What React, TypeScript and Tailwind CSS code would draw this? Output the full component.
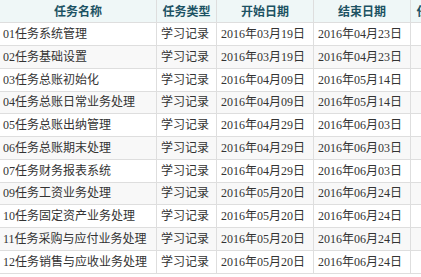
const ROWS: { name: string; start: string; end: string }[] = [
  { name: '01任务系统管理', start: '2016年03月19日', end: '2016年04月23日' },
  { name: '02任务基础设置', start: '2016年03月19日', end: '2016年04月23日' },
  { name: '03任务总账初始化', start: '2016年04月09日', end: '2016年05月14日' },
  { name: '04任务总账日常业务处理', start: '2016年04月09日', end: '2016年05月14日' },
  { name: '05任务总账出纳管理', start: '2016年04月29日', end: '2016年06月03日' },
  { name: '06任务总账期末处理', start: '2016年04月29日', end: '2016年06月03日' },
  { name: '07任务财务报表系统', start: '2016年04月29日', end: '2016年06月03日' },
  { name: '09任务工资业务处理', start: '2016年05月20日', end: '2016年06月24日' },
  { name: '10任务固定资产业务处理', start: '2016年05月20日', end: '2016年06月24日' },
  { name: '11任务采购与应付业务处理', start: '2016年05月20日', end: '2016年06月24日' },
  { name: '12任务销售与应收业务处理', start: '2016年05月20日', end: '2016年06月24日' },
];

const cell = 'shrink-0 h-full flex items-center border-r border-[#dedede] overflow-hidden whitespace-nowrap';

export default function App() {
  return (
    <div className="w-[421px] h-[277px] overflow-hidden bg-white text-[12px] text-[#333]" style={{ fontFamily: '"Liberation Serif", "Noto Sans CJK SC", serif' }}>
      <div className="w-[471px]">
        {/* Header */}
        <div className="flex h-[23.3px] bg-[#eff7f7] border-b border-[#dedede] font-bold text-[#1c5263]" style={{ fontFamily: '"Noto Sans CJK SC", sans-serif' }}>
          <div className={cell + ' w-[157px] justify-center'}>任务名称</div>
          <div className={cell + ' w-[60px] justify-center'}>任务类型</div>
          <div className={cell + ' w-[97px] justify-center'}>开始日期</div>
          <div className={cell + ' w-[97px] justify-center'}>结束日期</div>
          <div className={cell + ' w-[60px] justify-center'}>任务状态</div>
        </div>

        {/* Rows */}
        {ROWS.map((r, i) => (
          <div key={r.name} className={'flex h-[22.75px] border-b border-[#dedede] ' + (i % 2 ? 'bg-[#f8f8f8]' : 'bg-white')}>
            <div className={cell + ' w-[157px] pl-[3px]'}>{r.name}</div>
            <div className={cell + ' w-[60px] pl-[4px]'}>学习记录</div>
            <div className={cell + ' w-[97px] pl-[4px]'}>{r.start}</div>
            <div className={cell + ' w-[97px] pl-[4px]'}>{r.end}</div>
            <div className={cell + ' w-[60px]'}></div>
          </div>
        ))}
      </div>
    </div>
  );
}
